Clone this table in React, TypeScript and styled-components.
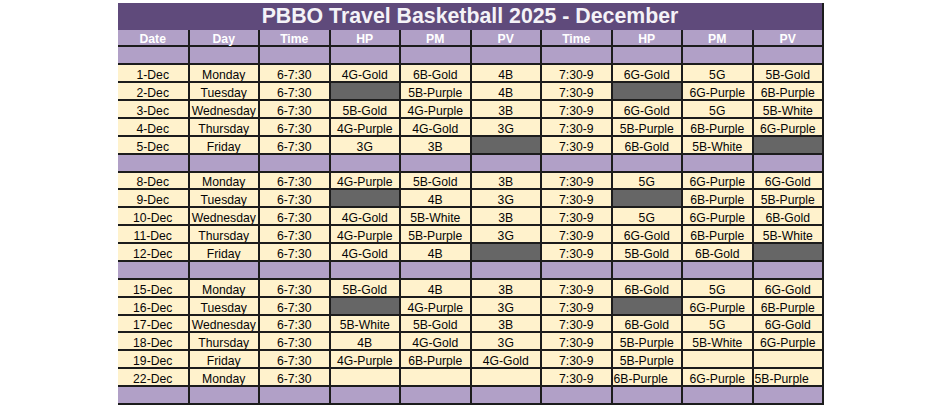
import React from "react";
import styled, { createGlobalStyle } from "styled-components";

const Global = createGlobalStyle`
  html, body { margin: 0; padding: 0; background: #ffffff; }
  body { font-family: "Liberation Sans", Arial, sans-serif; }
`;

const Page = styled.div`
  width: 942px;
  height: 406px;
  overflow: hidden;
  display: flex;
  flex-direction: column;
  align-items: center;
  padding-top: 3px;
  box-sizing: border-box;
`;

const Sheet = styled.table`
  width: 706px;
  border-collapse: collapse;
  table-layout: fixed;
  border-right: 2px solid #1c1c1c;
`;

const TitleCell = styled.th`
  height: 26.5px;
  padding: 0;
  background: #5f4a7b;
  color: #f4f2f7;
  font-size: 21.3px;
  font-weight: bold;
  text-align: center;
  line-height: 26px;
`;

const HeadCell = styled.th<{ $first?: boolean }>`
  height: 15.9px;
  padding: 0;
  background: #b1a0c7;
  color: #ffffff;
  font-size: 12.2px;
  font-weight: bold;
  text-align: center;
  vertical-align: bottom;
  line-height: 12px;
  border: 2px solid #1c1c1c;
  border-top: none;
  ${(p) => (p.$first ? "border-left: none;" : "")}
`;

type Kind = "text" | "gray" | "blank";

const Cell = styled.td<{ $kind: Kind; $left?: boolean; $first?: boolean }>`
  height: 15.88px;
  padding: 0 ${(p) => (p.$left ? "0 0 1px" : "0")};
  font-size: 12.2px;
  line-height: 12px;
  vertical-align: bottom;
  color: #050505;
  text-align: ${(p) => (p.$left ? "left" : "center")};
  white-space: nowrap;
  overflow: hidden;
  border: 2px solid #1c1c1c;
  ${(p) => (p.$first ? "border-left: none;" : "")}
  background: ${(p) =>
    p.$kind === "gray" ? "#666666" : p.$kind === "blank" ? "#b1a0c7" : "#fff2cc"};
`;

const G = "#GRAY";
const L = "<";

const headers = ["Date", "Day", "Time", "HP", "PM", "PV", "Time", "HP", "PM", "PV"];

const weeks: string[][][] = [
  [
    ["1-Dec", "Monday", "6-7:30", "4G-Gold", "6B-Gold", "4B", "7:30-9", "6G-Gold", "5G", "5B-Gold"],
    ["2-Dec", "Tuesday", "6-7:30", G, "5B-Purple", "4B", "7:30-9", G, "6G-Purple", "6B-Purple"],
    ["3-Dec", "Wednesday", "6-7:30", "5B-Gold", "4G-Purple", "3B", "7:30-9", "6G-Gold", "5G", "5B-White"],
    ["4-Dec", "Thursday", "6-7:30", "4G-Purple", "4G-Gold", "3G", "7:30-9", "5B-Purple", "6B-Purple", "6G-Purple"],
    ["5-Dec", "Friday", "6-7:30", "3G", "3B", G, "7:30-9", "6B-Gold", "5B-White", G],
  ],
  [
    ["8-Dec", "Monday", "6-7:30", "4G-Purple", "5B-Gold", "3B", "7:30-9", "5G", "6G-Purple", "6G-Gold"],
    ["9-Dec", "Tuesday", "6-7:30", G, "4B", "3G", "7:30-9", G, "6B-Purple", "5B-Purple"],
    ["10-Dec", "Wednesday", "6-7:30", "4G-Gold", "5B-White", "3B", "7:30-9", "5G", "6G-Purple", "6B-Gold"],
    ["11-Dec", "Thursday", "6-7:30", "4G-Purple", "5B-Purple", "3G", "7:30-9", "6G-Gold", "6B-Purple", "5B-White"],
    ["12-Dec", "Friday", "6-7:30", "4G-Gold", "4B", G, "7:30-9", "5B-Gold", "6B-Gold", G],
  ],
  [
    ["15-Dec", "Monday", "6-7:30", "5B-Gold", "4B", "3B", "7:30-9", "6B-Gold", "5G", "6G-Gold"],
    ["16-Dec", "Tuesday", "6-7:30", G, "4G-Purple", "3G", "7:30-9", G, "6G-Purple", "6B-Purple"],
    ["17-Dec", "Wednesday", "6-7:30", "5B-White", "5B-Gold", "3B", "7:30-9", "6B-Gold", "5G", "6G-Gold"],
    ["18-Dec", "Thursday", "6-7:30", "4B", "4G-Gold", "3G", "7:30-9", "5B-Purple", "5B-White", "6G-Purple"],
    ["19-Dec", "Friday", "6-7:30", "4G-Purple", "6B-Purple", "4G-Gold", "7:30-9", "5B-Purple", "", ""],
    ["22-Dec", "Monday", "6-7:30", "", "", "", "7:30-9", L + "6B-Purple", "6G-Purple", L + "5B-Purple"],
  ],
];

const BlankRow: React.FC = () => (
  <tr>
    {headers.map((_, i) => (
      <Cell key={i} $kind="blank" $first={i === 0} />
    ))}
  </tr>
);

const DataRow: React.FC<{ row: string[] }> = ({ row }) => (
  <tr>
    {row.map((v, i) => {
      if (v === G) return <Cell key={i} $kind="gray" $first={i === 0} />;
      const left = v.startsWith(L);
      return (
        <Cell key={i} $kind="text" $left={left} $first={i === 0}>
          {left ? v.slice(1) : v}
        </Cell>
      );
    })}
  </tr>
);

export default function App() {
  return (
    <Page>
      <Global />
      <Sheet>
        <thead>
          <tr>
            <TitleCell colSpan={10}>PBBO Travel Basketball 2025 - December</TitleCell>
          </tr>
          <tr>
            {headers.map((h, i) => (
              <HeadCell key={i} $first={i === 0}>
                {h}
              </HeadCell>
            ))}
          </tr>
        </thead>
        <tbody>
          {weeks.map((w, wi) => (
            <React.Fragment key={wi}>
              <BlankRow />
              {w.map((r, ri) => (
                <DataRow key={ri} row={r} />
              ))}
            </React.Fragment>
          ))}
          <BlankRow />
        </tbody>
      </Sheet>
    </Page>
  );
}
